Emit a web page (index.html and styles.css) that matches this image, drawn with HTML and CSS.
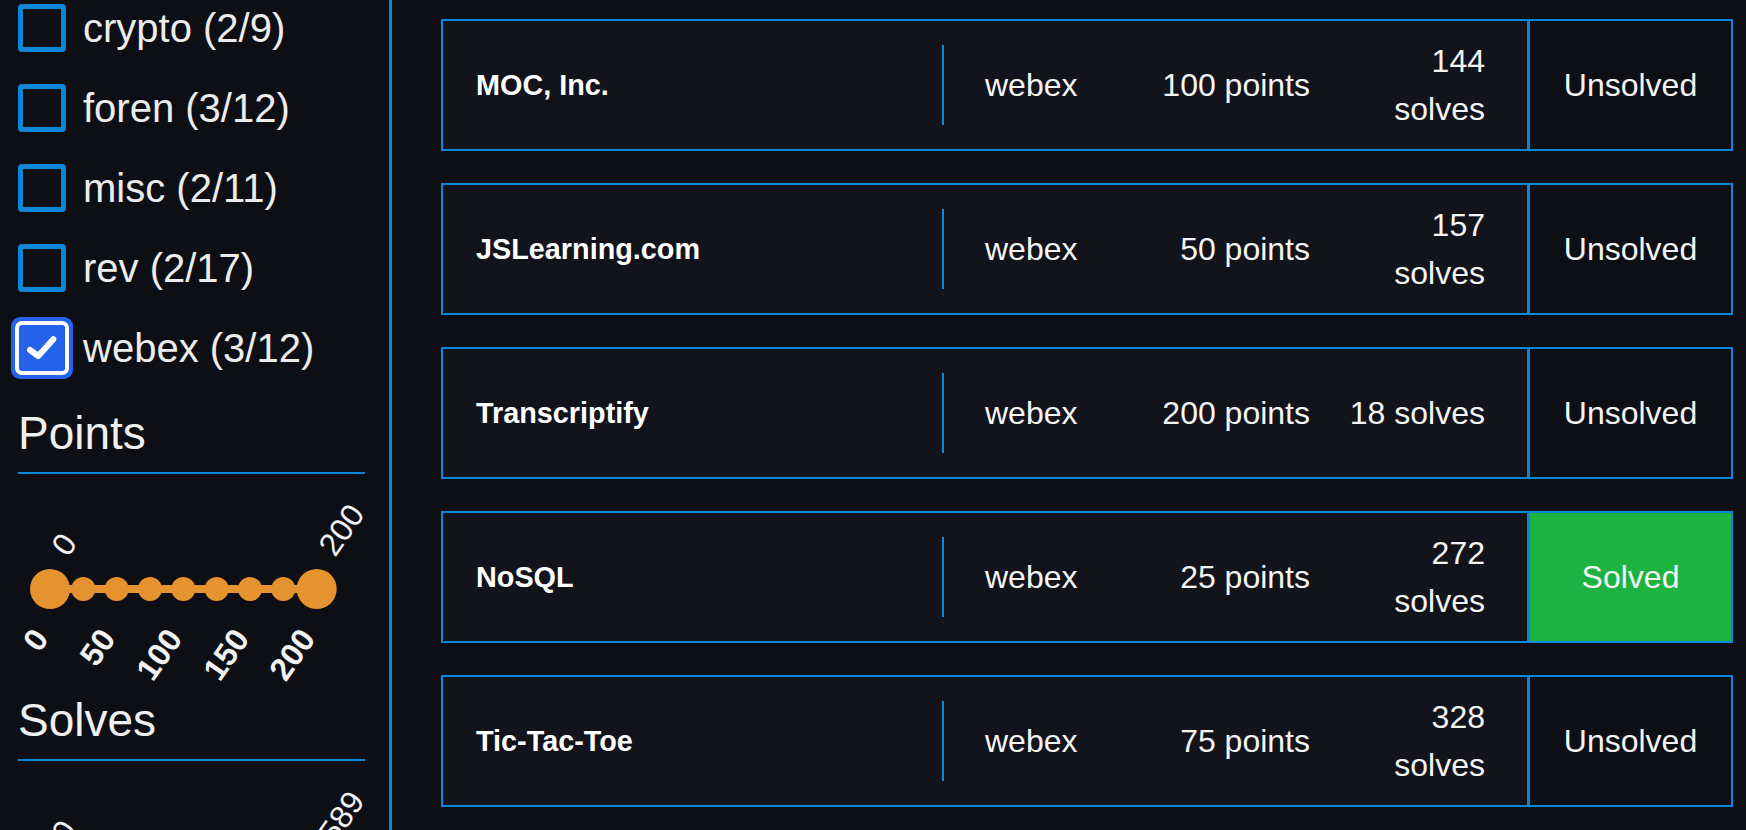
FILE: index.html
```html
<!DOCTYPE html>
<html lang="en">
<head>
<meta charset="utf-8">
<title>Challenges</title>
<link rel="stylesheet" href="styles.css">
</head>
<body>
<div class="page">
  <aside class="sidebar">
    <ul class="cats">
      <li class="cat"><span class="box"></span><span class="cat-label">crypto (2/9)</span></li>
      <li class="cat"><span class="box"></span><span class="cat-label">foren (3/12)</span></li>
      <li class="cat"><span class="box"></span><span class="cat-label">misc (2/11)</span></li>
      <li class="cat"><span class="box"></span><span class="cat-label">rev (2/17)</span></li>
      <li class="cat"><span class="box checked"><svg class="tick" width="46" height="46" viewBox="0 0 46 46"><path d="M11 25 L19.3 31 L34.3 14.3" fill="none" stroke="#fff" stroke-width="6" stroke-linecap="round" stroke-linejoin="round"/></svg></span><span class="cat-label">webex (3/12)</span></li>
    </ul>

    <section class="filter">
      <h2 class="filter-title">Points</h2>
      <div class="range">
        <svg class="range-track" width="347" height="40" viewBox="0 0 347 40">
          <line x1="32" y1="20" x2="298.7" y2="20" stroke="#e5932f" stroke-width="8"/>
          <circle cx="65.3" cy="20" r="12" fill="#e5932f"/>
          <circle cx="98.7" cy="20" r="12" fill="#e5932f"/>
          <circle cx="132" cy="20" r="12" fill="#e5932f"/>
          <circle cx="165.3" cy="20" r="12" fill="#e5932f"/>
          <circle cx="198.7" cy="20" r="12" fill="#e5932f"/>
          <circle cx="232" cy="20" r="12" fill="#e5932f"/>
          <circle cx="265.3" cy="20" r="12" fill="#e5932f"/>
          <circle cx="32" cy="20" r="20" fill="#e5932f"/>
          <circle cx="298.7" cy="20" r="20" fill="#e5932f"/>
        </svg>
        <span class="val" style="left:50px"><span class="val-text">0</span></span>
        <span class="val" style="left:317px"><span class="val-text">200</span></span>
        <span class="mark" style="left:32px"><span class="mark-text">0</span></span>
        <span class="mark" style="left:98.7px"><span class="mark-text">50</span></span>
        <span class="mark" style="left:165.3px"><span class="mark-text">100</span></span>
        <span class="mark" style="left:232px"><span class="mark-text">150</span></span>
        <span class="mark" style="left:298.7px"><span class="mark-text">200</span></span>
      </div>
    </section>

    <section class="filter">
      <h2 class="filter-title">Solves</h2>
      <div class="range">
        <svg class="range-track" width="347" height="40" viewBox="0 0 347 40">
          <line x1="32" y1="20" x2="298.7" y2="20" stroke="#e5932f" stroke-width="8"/>
          <circle cx="32" cy="20" r="20" fill="#e5932f"/>
          <circle cx="298.7" cy="20" r="20" fill="#e5932f"/>
        </svg>
        <span class="val" style="left:50px"><span class="val-text">0</span></span>
        <span class="val" style="left:317px"><span class="val-text">589</span></span>
      </div>
    </section>
  </aside>

  <main class="main">
    <div class="card">
      <div class="card-title">MOC, Inc.</div>
      <div class="card-divider"></div>
      <div class="card-info">
        <span class="info-cat">webex</span>
        <span class="info-num">100 points</span>
        <span class="info-num">144 solves</span>
      </div>
      <div class="card-status">Unsolved</div>
    </div>
    <div class="card">
      <div class="card-title">JSLearning.com</div>
      <div class="card-divider"></div>
      <div class="card-info">
        <span class="info-cat">webex</span>
        <span class="info-num">50 points</span>
        <span class="info-num">157 solves</span>
      </div>
      <div class="card-status">Unsolved</div>
    </div>
    <div class="card">
      <div class="card-title">Transcriptify</div>
      <div class="card-divider"></div>
      <div class="card-info">
        <span class="info-cat">webex</span>
        <span class="info-num">200 points</span>
        <span class="info-num">18 solves</span>
      </div>
      <div class="card-status">Unsolved</div>
    </div>
    <div class="card">
      <div class="card-title">NoSQL</div>
      <div class="card-divider"></div>
      <div class="card-info">
        <span class="info-cat">webex</span>
        <span class="info-num">25 points</span>
        <span class="info-num">272 solves</span>
      </div>
      <div class="card-status solved">Solved</div>
    </div>
    <div class="card">
      <div class="card-title">Tic-Tac-Toe</div>
      <div class="card-divider"></div>
      <div class="card-info">
        <span class="info-cat">webex</span>
        <span class="info-num">75 points</span>
        <span class="info-num">328 solves</span>
      </div>
      <div class="card-status">Unsolved</div>
    </div>
  </main>
</div>
</body>
</html>
```

FILE: styles.css
```css
:root {
  --bg: #0e0f14;
  --card: #12131b;
  --blue: #0987d8;
  --text: #eeeeee;
  --orange: #e5932f;
  --green: #1db343;
}

* { box-sizing: border-box; }

html, body {
  margin: 0;
  padding: 0;
  background: var(--bg);
  color: var(--text);
  font-family: "Liberation Sans", Arial, sans-serif;
}

body {
  height: 830px;
  overflow: hidden;
}

.page {
  display: flex;
  height: 830px;
}

/* Sidebar */
.sidebar {
  width: 392px;
  flex: none;
  padding: 4px 24px 0 18px;
  border-right: 3px solid var(--blue);
}

.cats {
  list-style: none;
  margin: 0;
  padding: 0;
  display: flex;
  flex-direction: column;
  gap: 32px;
}

.cat {
  display: flex;
  align-items: center;
  height: 48px;
  gap: 17px;
}

.box {
  width: 48px;
  height: 48px;
  flex: none;
  border: 5px solid var(--blue);
  border-radius: 4px;
}

.box.checked {
  width: 46px;
  height: 46px;
  margin: 1px;
  border: none;
  border-radius: 3px;
  background: #2563eb;
  box-shadow: 0 0 0 4px #ffffff, 0 0 0 8px #2563eb;
}

.tick { display: block; }

.cat-label {
  font-size: 40px;
  line-height: 48px;
  color: #ececec;
  white-space: nowrap;
}

.filter-title {
  margin: 34px 0 0;
  font-size: 46px;
  font-weight: 400;
  line-height: 55px;
  padding-bottom: 11px;
  border-bottom: 2px solid var(--blue);
  color: #f0f0f0;
}

.filter + .filter .filter-title { margin-top: 0; }

.range {
  position: relative;
  height: 219px;
  padding-top: 95px;
}

.range-track {
  display: block;
}

.val, .mark {
  position: absolute;
  width: 0;
  height: 0;
}

.val { top: 84px; }
.mark { top: 165px; }

.val-text, .mark-text {
  position: absolute;
  top: -27px;
  font-size: 32px;
  line-height: 32px;
  white-space: nowrap;
  color: #f2f2f2;
}

.val-text {
  left: 0;
  transform-origin: 0 27px;
  transform: rotate(-55deg);
}

.mark-text {
  right: 0;
  font-weight: 700;
  transform-origin: 100% 27px;
  transform: rotate(-55deg);
}

/* Main list */
.main {
  flex: 1;
  padding: 19px 13px 0 49px;
  display: flex;
  flex-direction: column;
  gap: 32px;
}

.card {
  display: flex;
  align-items: center;
  height: 132px;
  flex: none;
  border: 2px solid var(--blue);
  background: var(--card);
}

.card-title {
  flex: 1;
  padding-left: 33px;
  font-size: 28.8px;
  font-weight: 700;
  color: #ffffff;
  white-space: nowrap;
}

.card-divider {
  width: 2px;
  height: 80px;
  flex: none;
  background: var(--blue);
}

.card-info {
  width: 583px;
  flex: none;
  padding: 0 42px 0 41px;
  display: grid;
  grid-template-columns: 150px 150px 150px;
  column-gap: 25px;
  align-items: center;
  font-size: 32px;
  line-height: 48px;
  color: #f4f4f4;
}

.info-cat { text-align: left; }
.info-num { text-align: right; }

.card-status {
  width: 204px;
  flex: none;
  align-self: stretch;
  border-left: 3px solid var(--blue);
  background: var(--bg);
  display: flex;
  align-items: center;
  justify-content: center;
  font-size: 32px;
  color: #f4f4f4;
}

.card-status.solved {
  background: var(--green);
}
```
